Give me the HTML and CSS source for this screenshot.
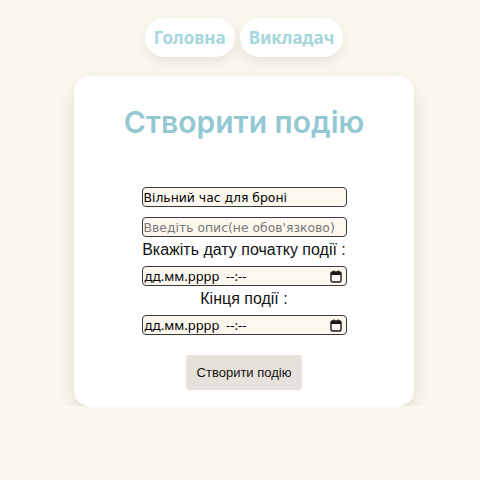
FILE: index.html
```html
<!DOCTYPE html>
<html lang="uk">
<head>
<meta charset="utf-8">
<title>Створити подію</title>
<link rel="stylesheet" href="styles.css">
</head>
<body>
<nav class="nav">
  <a class="pill" href="#">Головна</a>
  <a class="pill" href="#">Викладач</a>
</nav>
<main class="card">
  <h1 class="title">Створити подію</h1>
  <form class="form">
    <input class="field text" type="text" value="Вільний час для броні">
    <input class="field text" type="text" placeholder="Введіть опис(не обов'язково)">
    <label class="label">Вкажіть дату початку події :</label>
    <div class="field date"><span>дд.мм.рррр&nbsp; --:--</span>
      <svg class="cal" width="12" height="13" viewBox="0 0 12 13"><rect x="1" y="2" width="10" height="10" rx="1.5" fill="none" stroke="#1a1a1a" stroke-width="1.4"/><rect x="1" y="2" width="10" height="3" fill="#1a1a1a"/><rect x="3" y="0.5" width="1.4" height="2" fill="#1a1a1a"/><rect x="7.6" y="0.5" width="1.4" height="2" fill="#1a1a1a"/></svg>
    </div>
    <label class="label">Кінця події :</label>
    <div class="field date"><span>дд.мм.рррр&nbsp; --:--</span>
      <svg class="cal" width="12" height="13" viewBox="0 0 12 13"><rect x="1" y="2" width="10" height="10" rx="1.5" fill="none" stroke="#1a1a1a" stroke-width="1.4"/><rect x="1" y="2" width="10" height="3" fill="#1a1a1a"/><rect x="3" y="0.5" width="1.4" height="2" fill="#1a1a1a"/><rect x="7.6" y="0.5" width="1.4" height="2" fill="#1a1a1a"/></svg>
    </div>
    <button class="btn" type="button">Створити подію</button>
  </form>
</main>
</body>
</html>
```
FILE: styles.css
```css
html, body {
  margin: 0;
  padding: 0;
  background: #faf7f0;
}
body {
  padding-left: 8px;
  font-family: "Noto Sans", "Liberation Sans", sans-serif;
}
.nav {
  display: flex;
  justify-content: center;
  gap: 5px;
  padding-top: 18px;
}
.pill {
  display: block;
  height: 39px;
  box-sizing: border-box;
  padding: 0 9px;
  line-height: 39px;
  border-radius: 20px;
  background: #fff;
  color: #a6d6de;
  font-family: "Noto Sans", sans-serif;
  font-weight: 700;
  font-size: 17px;
  text-decoration: none;
  box-shadow: 0 5px 12px rgba(120, 100, 60, 0.12);
}
.card {
  width: 340px;
  box-sizing: border-box;
  margin: 19px auto 0;
  background: #fff;
  border-radius: 16px;
  padding: 28px 0 16px;
  box-shadow: 0 10px 18px rgba(110, 95, 60, 0.16);
}
.title {
  margin: 0;
  text-align: center;
  font-family: Inter, "Noto Sans", sans-serif;
  font-size: 30px;
  line-height: 36px;
  font-weight: 600;
  color: #93c8d3;
}
.form {
  display: flex;
  flex-direction: column;
  align-items: center;
  margin-top: 47px;
}
.field {
  width: 205px;
  height: 20px;
  box-sizing: border-box;
  border: 1px solid #3a3a3a;
  border-radius: 4px;
  background: #fcf8f0;
  padding: 0 1px;
  font-family: "Noto Sans", "Liberation Sans", sans-serif;
  font-size: 13px;
  color: #000;
  outline: none;
}
.text {
  font-family: "DejaVu Sans", sans-serif;
  font-size: 12.4px;
}
.field + .field {
  margin-top: 10px;
}
.field::placeholder {
  color: #777;
}
.date {
  display: flex;
  align-items: center;
  justify-content: space-between;
  margin-top: 6px;
  padding: 0 4px 0 2px;
}
.cal {
  display: block;
}
.label {
  margin-top: 3px;
  font-family: "Liberation Sans", sans-serif;
  font-size: 16px;
  line-height: 20px;
  color: #111;
}
.btn {
  margin-top: 20px;
  width: 116px;
  height: 35px;
  border: none;
  border-radius: 4px;
  background: #e6e1da;
  font-family: "Liberation Sans", Arial, sans-serif;
  font-size: 13px;
  color: #111;
}
```
